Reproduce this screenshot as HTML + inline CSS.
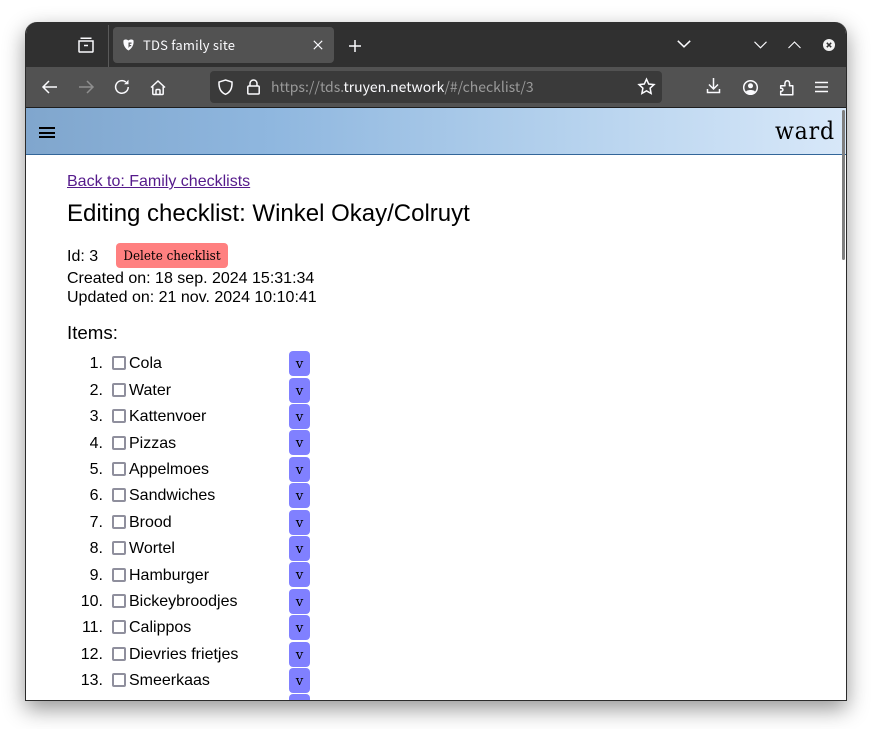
<!DOCTYPE html>
<html><head><meta charset="utf-8"><title>TDS family site</title>
<style>
html,body{margin:0;padding:0;width:872px;height:729px;overflow:hidden;background:#fff}
*{box-sizing:border-box}
#win{position:absolute;left:25px;top:22px;width:822px;height:679px;border-radius:12px 12px 0 0;background:#fff;box-shadow:0 8px 22px rgba(0,0,0,.42);overflow:hidden;border:1px solid #2b2b2b;border-top:0}
#in{position:absolute;left:-1px;top:0;width:822px;height:679px}
.t{position:absolute;white-space:nowrap;font-family:"Liberation Sans",sans-serif;font-size:16px;line-height:18px;color:#000}
.ui{font-family:"Noto Sans CJK SC","DejaVu Sans",sans-serif}
.n{width:40px;text-align:right;left:38px}
.cb{position:absolute;left:87px;width:14px;height:14px;border:2px solid #8f8f9d;border-radius:2px;background:#fff}
.v{position:absolute;left:264px;width:21px;height:25px;background:#8080ff;border-radius:4px;font-family:"DejaVu Serif",serif;font-size:13.300px;text-align:center;line-height:28px;color:#000}
svg{position:absolute;overflow:visible;fill:none;stroke:#fbfbfe;stroke-width:1.5}
</style></head><body>
<div id="win"><div id="in">
<div style="position:absolute;left:0;top:0;width:822px;height:45px;background:#303030"></div>
<div style="position:absolute;left:0;top:45px;width:822px;height:40px;background:#525252"></div>
<div style="position:absolute;left:0;top:85px;width:822px;height:1px;background:#1e1e1e"></div>
<div style="position:absolute;left:83px;top:3px;width:1px;height:42px;background:#5a5a5a"></div>

<svg style="left:53px;top:15px" width="16" height="16" viewBox="0 0 16 16"><path d="M2.5 1.2h11M1 4h14v10.2a.8.8 0 0 1-.8.8H1.8a.8.8 0 0 1-.8-.8zM6 8.5h4"/></svg>

<div style="position:absolute;left:88px;top:5px;width:221px;height:36px;background:#525252;border-radius:4px"></div>
<svg style="left:98px;top:17px;stroke:none;fill:#fbfbfe" width="11" height="12" viewBox="0 0 11 12"><path d="M.5 1.500C1.500.2 3.800.2 5.500 1.500 7.200.2 9.500.2 10.500 1.500c.6 4-1.500 8-5 10C2 9.500-.1 5.500.5 1.500z"/><path d="M5.500 3.500h3v1.300H6.800v1.200h1.400v1.200H6.800L5.500 9z" fill="#525252"/></svg>
<div class="t ui" style="left:118px;top:14px;font-size:13px;color:#fbfbfe;letter-spacing:.2px">TDS family site</div>
<svg style="left:288px;top:18px;stroke-width:1.100" width="10" height="10" viewBox="0 0 10 10"><path d="M.8.800l8.400 8.400M9.200.800L.8 9.200"/></svg>
<svg style="left:324px;top:18px" width="12" height="12" viewBox="0 0 12 12"><path d="M6 0v12M0 6h12"/></svg>

<svg style="left:652px;top:18px" width="14" height="8" viewBox="0 0 14 8"><path d="M.8.800 7 6.800 13.200.800"/></svg>
<svg style="left:729px;top:19px;stroke-width:1.100" width="13" height="8" viewBox="0 0 13 8"><path d="M.5.800 6.500 6.800 12.500.800"/></svg>
<svg style="left:763px;top:19px;stroke-width:1.100" width="13" height="8" viewBox="0 0 13 8"><path d="M.5 7 6.500 1 12.500 7"/></svg>
<svg style="left:798px;top:17px;stroke:none;fill:#f2f2f2" width="12" height="12" viewBox="0 0 12 12"><circle cx="6" cy="6" r="6"/><path d="M3.800 3.800l4.400 4.400M8.200 3.800L3.800 8.200" stroke="#303030" stroke-width="1.500"/></svg>

<svg style="left:17px;top:58px" width="16" height="14" viewBox="0 0 16 14"><path d="M15 7H1.500M7 1 1 7l6 6"/></svg>
<svg style="left:53px;top:58px;stroke:#8f8f8f" width="16" height="14" viewBox="0 0 16 14"><path d="M1 7h13.500M9 1l6 6-6 6"/></svg>
<svg style="left:89px;top:57px" width="16" height="16" viewBox="0 0 16 16"><path d="M14.200 8A6.300 6.300 0 1 1 11.800 3"/><path d="M14.500.8v4.400h-4.400" fill="#fbfbfe" stroke="none"/></svg>
<svg style="left:125px;top:58px" width="16" height="16" viewBox="0 0 16 16"><path d="M1 7.500 8 1l7 6.500M2.800 6.500V13.500a1 1 0 0 0 1 1H12.200a1 1 0 0 0 1-1V6.500M6 14.500V10.500a1 1 0 0 1 1-1h2a1 1 0 0 1 1 1v4"/></svg>

<div style="position:absolute;left:185px;top:49px;width:452px;height:32px;background:#3a3a3a;border-radius:4px"></div>
<svg style="left:193px;top:57px" width="15" height="16" viewBox="0 0 15 16"><path d="M7.500 1 14 3c.3 6-2 10.500-6.500 12.300C3 13.500.7 9 1 3z"/></svg>
<svg style="left:222px;top:57px" width="13" height="16" viewBox="0 0 13 16"><path d="M3 7V4.500a3.500 3.500 0 0 1 7 0V7M1.800 7h9.400a1 1 0 0 1 1 1v6a1 1 0 0 1-1 1H1.800a1 1 0 0 1-1-1V8a1 1 0 0 1 1-1z"/></svg>
<div class="t ui" style="left:246px;top:56px;font-size:14px;color:#9a9a9a">https://tds.<span style="color:#fbfbfe">truyen.network</span>/#/checklist/3</div>
<svg style="left:613px;top:56px" width="17" height="17" viewBox="0 0 17 17"><path d="M8.500 1.200 10.700 6l5.300.6-3.900 3.600 1 5.200-4.600-2.600-4.600 2.600 1-5.200L1 6.600 6.300 6z"/></svg>
<svg style="left:681px;top:56px" width="15" height="16" viewBox="0 0 15 16"><path d="M7.500 0v10.500M3 6.500l4.500 4.500L12 6.500M1.500 11v3.500h12V11"/></svg>
<svg style="left:718px;top:58px" width="15" height="15" viewBox="0 0 15 15"><circle cx="7.500" cy="7.500" r="6.800"/><circle cx="7.500" cy="5.800" r="2.500" fill="#fbfbfe" stroke="none"/><path d="M3 11.500c1-2 8-2 9 0l-2 2H5z" fill="#fbfbfe" stroke="none"/></svg>
<svg style="left:754px;top:57px" width="15" height="17" viewBox="0 0 15 17"><path d="M1.700 6.700H6C5.500 3.500 6.500 1.700 8.300 1.700S11 3.500 10.500 6.700h3.300v9H1.700V12.300C4.700 12.800 4.700 8.800 1.700 9.300z" stroke-linejoin="round"/></svg>
<svg style="left:790px;top:59px" width="13" height="12" viewBox="0 0 13 12"><path d="M0 1.500h13M0 6h13M0 10.500h13"/></svg>

<div style="position:absolute;left:0;top:86px;width:822px;height:47px;background:linear-gradient(90deg,#80a6cd 0%,#8fb7df 30%,#b7d3ee 68%,#d8e8f9 100%);border-bottom:1px solid #336699"></div>
<div style="position:absolute;left:14px;top:105px;width:16px;height:2px;background:#000"></div>
<div style="position:absolute;left:14px;top:109.500px;width:16px;height:2px;background:#000"></div>
<div style="position:absolute;left:14px;top:114px;width:16px;height:2px;background:#000"></div>
<div class="t" style="left:750px;top:94px;font-family:'DejaVu Serif Condensed','DejaVu Serif',serif;font-stretch:condensed;font-size:24.500px;line-height:30px;letter-spacing:.8px">ward</div>
<div style="position:absolute;left:817px;top:88px;width:3px;height:150px;background:#7f7f7f;border-radius:2px"></div>

<div class="t" style="left:42px;top:151px;color:#551a8b;text-decoration:underline">Back to: Family checklists</div>
<div class="t" style="left:42px;top:178px;font-size:24px;line-height:28px">Editing checklist: Winkel Okay/Colruyt</div>
<div class="t" style="left:42px;top:226px">Id: 3</div>
<div style="position:absolute;left:91px;top:221px;width:112px;height:25px;background:#ff8080;border-radius:4px;font-family:'DejaVu Serif Condensed','DejaVu Serif',serif;font-stretch:condensed;font-size:13.300px;text-align:center;line-height:28px;color:#000;white-space:nowrap">Delete checklist</div>
<div class="t" style="left:42px;top:248px">Created on: 18 sep. 2024 15:31:34</div>
<div class="t" style="left:42px;top:267px">Updated on: 21 nov. 2024 10:10:41</div>
<div class="t" style="left:42px;top:300px;font-size:18.700px;line-height:21px">Items:</div>

<div class="t n" style="top:333px">1.</div><div class="cb" style="top:334px"></div><div class="t" style="left:104px;top:333px">Cola</div><div class="v" style="top:329px">v</div>
<div class="t n" style="top:360px">2.</div><div class="cb" style="top:361px"></div><div class="t" style="left:104px;top:360px">Water</div><div class="v" style="top:356px">v</div>
<div class="t n" style="top:386px">3.</div><div class="cb" style="top:387px"></div><div class="t" style="left:104px;top:386px">Kattenvoer</div><div class="v" style="top:382px">v</div>
<div class="t n" style="top:413px">4.</div><div class="cb" style="top:414px"></div><div class="t" style="left:104px;top:413px">Pizzas</div><div class="v" style="top:408px">v</div>
<div class="t n" style="top:439px">5.</div><div class="cb" style="top:440px"></div><div class="t" style="left:104px;top:439px">Appelmoes</div><div class="v" style="top:435px">v</div>
<div class="t n" style="top:465px">6.</div><div class="cb" style="top:466px"></div><div class="t" style="left:104px;top:465px">Sandwiches</div><div class="v" style="top:461px">v</div>
<div class="t n" style="top:492px">7.</div><div class="cb" style="top:493px"></div><div class="t" style="left:104px;top:492px">Brood</div><div class="v" style="top:488px">v</div>
<div class="t n" style="top:518px">8.</div><div class="cb" style="top:519px"></div><div class="t" style="left:104px;top:518px">Wortel</div><div class="v" style="top:514px">v</div>
<div class="t n" style="top:545px">9.</div><div class="cb" style="top:546px"></div><div class="t" style="left:104px;top:545px">Hamburger</div><div class="v" style="top:540px">v</div>
<div class="t n" style="top:571px">10.</div><div class="cb" style="top:572px"></div><div class="t" style="left:104px;top:571px">Bickeybroodjes</div><div class="v" style="top:567px">v</div>
<div class="t n" style="top:597px">11.</div><div class="cb" style="top:598px"></div><div class="t" style="left:104px;top:597px">Calippos</div><div class="v" style="top:593px">v</div>
<div class="t n" style="top:624px">12.</div><div class="cb" style="top:625px"></div><div class="t" style="left:104px;top:624px">Dievries frietjes</div><div class="v" style="top:620px">v</div>
<div class="t n" style="top:650px">13.</div><div class="cb" style="top:651px"></div><div class="t" style="left:104px;top:650px">Smeerkaas</div><div class="v" style="top:646px">v</div>
<div class="v" style="top:672px"></div>
</div></div>
</body></html>
